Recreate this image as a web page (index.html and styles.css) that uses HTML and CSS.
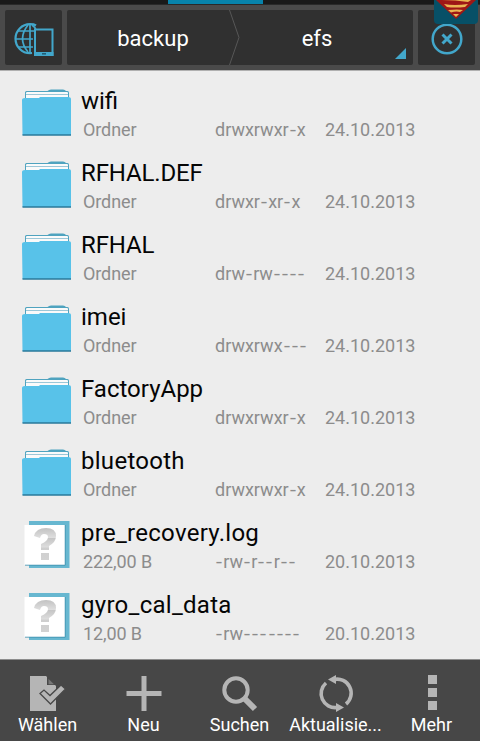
FILE: index.html
```
<!DOCTYPE html>
<html lang="de">
<head>
<meta charset="utf-8">
<title>efs</title>
<link rel="stylesheet" href="styles.css">
</head>
<body>
<svg class="defs" width="0" height="0" aria-hidden="true">
  <symbol id="folder" viewBox="0 0 50 48">
    <path d="M3 10V3.500Q3 2 4.500 2H25.500Q27 .5 29 .5H41Q43 .5 44 2H45.500Q47 2 47 4V10Z" fill="#4fa3bf"/>
    <path d="M4 10V4.200Q4 3 5 3H45Q46 3 46 4V10Z" fill="#fafafa"/>
    <path d="M4 5.500H46" stroke="#9bc7d8"/>
    <path d="M0 11Q0 9 3 9H17L18 8H46Q49 8 49 10V46H.5Z" fill="#58c2e9"/>
    <path d="M.5 46H49" stroke="#28799a" stroke-width="1.300"/>
  </symbol>
  <symbol id="unknown" viewBox="0 0 50 48">
    <path d="M7 0H47.500V47H7Z" fill="#67b7d0"/>
    <path d="M2.500 4H43V44H2.500Z" fill="#fff"/>
    <path d="M3 44.200H43.200V4" fill="none" stroke="#3d91ad" stroke-width=".8"/>
    <path d="M12 15Q14 7 24 7Q34 7 34 15Q34 21 27 25V29H19V23Q26 20 26 16Q26 13 22 13Q19 13 18 17ZM19 32H27V39H19Z" fill="url(#mark)"/>
  </symbol>
  <defs><linearGradient id="mark" x1="0" y1="0" x2="0" y2="1"><stop offset="0" stop-color="#c2c2c2"/><stop offset=".3" stop-color="#dedede"/><stop offset=".32" stop-color="#c5c5c5"/><stop offset=".6" stop-color="#dedede"/><stop offset=".62" stop-color="#cecece"/><stop offset="1" stop-color="#d2d2d2"/></linearGradient></defs>
</svg>
<div class="status"><div class="progress"></div></div>
<header class="top">
  <div class="btn">
    <svg width="40" height="34" viewBox="0 0 40 34" fill="none" stroke="#42a7cb">
      <path d="M22 3.500Q20 2.200 16 2.200A14.500 14.500 0 0 0 16 31.200L18 31" stroke-width="2.200"/>
      <path d="M16 2V31M14 3Q3 17 14 30M18 3Q21 5 22 8M4 9H20M1 17H19M4 25H19" stroke-width="1.700"/>
      <path d="M21 7.500H38.500V33H21Z" stroke-width="2" fill="#303030"/>
      <path d="M20 30H39.500V34H20Z" fill="#42a7cb" stroke="none"/>
      <path d="M28 31.800H32" stroke="#205a72" stroke-width="1.500"/>
    </svg>
  </div>
  <nav class="crumbs">
    <span class="crumb first">backup</span>
    <svg class="sep" width="12" height="55" viewBox="0 0 12 55" fill="none" stroke="#575757"><path d="M1.500 0L11 27.500L1.500 55"/></svg>
    <span class="crumb last">efs</span>
    <span class="corner"></span>
  </nav>
  <div class="btn">
    <svg width="32" height="32" viewBox="0 0 32 32" fill="none" stroke="#42a7cb"><circle cx="16" cy="16" r="14.300" stroke-width="2.500"/><path d="M11.500 11.500L20.500 20.500M20.500 11.500L11.500 20.500" stroke-width="3"/></svg>
  </div>
  <svg class="badge" width="44" height="24" viewBox="0 0 44 24">
    <path d="M0 0H44V20Q44 24 40 24H4Q0 24 0 20Z" fill="#075067"/>
    <path d="M2 0H42L22 19Z" fill="#9e1716"/>
    <path d="M8 0H37L34 2Q22 0 8 0ZM10 4Q20 6 34 4L31 7Q20 8 13 7ZM14 10Q24 9 29 10L26 12Q22 11 17 12.500ZM19 14H25L22 17Z" fill="#eab552"/>
  </svg>
</header>
<main class="list">
  <div class="row"><svg class="ico"><use href="#folder"/></svg><div class="name">wifi</div><div class="meta"><span class="kind">Ordner</span><span class="perm">drwxrwxr<i>-</i>x</span><span class="date">24.10.2013</span></div></div>
  <div class="row"><svg class="ico"><use href="#folder"/></svg><div class="name tight">RFHAL.DEF</div><div class="meta"><span class="kind">Ordner</span><span class="perm">drwxr<i>-</i>xr<i>-</i>x</span><span class="date">24.10.2013</span></div></div>
  <div class="row"><svg class="ico"><use href="#folder"/></svg><div class="name tight">RFHAL</div><div class="meta"><span class="kind">Ordner</span><span class="perm">drw<i>-</i>rw<i>-</i><i>-</i><i>-</i><i>-</i></span><span class="date">24.10.2013</span></div></div>
  <div class="row"><svg class="ico"><use href="#folder"/></svg><div class="name">imei</div><div class="meta"><span class="kind">Ordner</span><span class="perm">drwxrwx<i>-</i><i>-</i><i>-</i></span><span class="date">24.10.2013</span></div></div>
  <div class="row"><svg class="ico"><use href="#folder"/></svg><div class="name">FactoryApp</div><div class="meta"><span class="kind">Ordner</span><span class="perm">drwxrwxr<i>-</i>x</span><span class="date">24.10.2013</span></div></div>
  <div class="row"><svg class="ico"><use href="#folder"/></svg><div class="name wide">bluetooth</div><div class="meta"><span class="kind">Ordner</span><span class="perm">drwxrwxr<i>-</i>x</span><span class="date">24.10.2013</span></div></div>
  <div class="row"><svg class="ico"><use href="#unknown"/></svg><div class="name wide">pre_recovery.log</div><div class="meta"><span class="kind">222,00 B</span><span class="perm"><i>-</i>rw<i>-</i>r<i>-</i><i>-</i>r<i>-</i><i>-</i></span><span class="date">20.10.2013</span></div></div>
  <div class="row"><svg class="ico"><use href="#unknown"/></svg><div class="name wide">gyro_cal_data</div><div class="meta"><span class="kind">12,00 B</span><span class="perm"><i>-</i>rw<i>-</i><i>-</i><i>-</i><i>-</i><i>-</i><i>-</i><i>-</i></span><span class="date">20.10.2013</span></div></div>
</main>
<footer class="bar">
  <div class="tool"><svg width="36" height="36" viewBox="0 0 36 36"><path d="M0 0H16L26 10V35H0Z" fill="#b5b5b5"/><path d="M17 0V9H26Z" fill="#484848"/><path d="M18.500 3V8.300H24Z" fill="#777"/><path d="M10 17.500L14 14L20 19.500L31 9L35.500 13L20.500 28Z" fill="#b5b5b5" stroke="#484848" stroke-width="1.300"/></svg><span>Wählen</span></div>
  <div class="tool"><svg width="36" height="36" viewBox="0 0 36 36"><path d="M18 0V35M.5 17.500H35.500" stroke="#b5b5b5" stroke-width="5"/></svg><span>Neu</span></div>
  <div class="tool"><svg width="36" height="36" viewBox="0 0 36 36" fill="none" stroke="#b5b5b5"><circle cx="14" cy="14" r="11.700" stroke-width="4"/><path d="M22.500 22.500L33 33" stroke-width="6"/></svg><span>Suchen</span></div>
  <div class="tool"><svg width="36" height="36" viewBox="0 0 36 36" fill="none" stroke="#b5b5b5" stroke-width="3.600"><path d="M8 7A14 14 0 0 0 19 31.500M28 28A14 14 0 0 0 16 3.500"/><path d="M10 3.500L18-1V8ZM26 31.500L18 27V36Z" fill="#b5b5b5" stroke="none"/></svg><span>Aktualisie...</span></div>
  <div class="tool"><svg width="36" height="36" viewBox="0 0 36 36"><path d="M14-1H23V8H14ZM14 12H23V21H14ZM14 25H23V34H14Z" fill="#b5b5b5"/></svg><span>Mehr</span></div>
</footer>
</body>
</html>
```
FILE: styles.css
```
* { box-sizing: border-box; }
body {
  margin: 0;
  width: 480px;
  height: 741px;
  overflow: hidden;
  display: flex;
  flex-direction: column;
  background: #ededed;
  font-family: Roboto, sans-serif;
}
svg { overflow: visible; }
.defs { position: absolute; }
.status { height: 5px; flex: none; background: #191919; border-bottom: 1px solid #292929; }
.progress { width: 95px; height: 4px; margin-left: 168px; background: #0783ab; }
.top {
  position: relative;
  flex: none;
  height: 66px;
  padding: 5px 5px 5px;
  display: flex;
  gap: 5px;
  background: #4a4a4a;
  border-bottom: 1px solid #b0b0b0;
}
.btn {
  width: 57px;
  padding-top: 2px;
  border-radius: 2px;
  background: #303030;
  display: flex;
  align-items: center;
  justify-content: center;
}
.crumbs {
  position: relative;
  flex: 1;
  display: flex;
  align-items: center;
  border-radius: 2px;
  background: #303030;
  color: #fff;
  font-size: 22px;
}
.crumb { text-align: center; padding-top: 2px; }
.first { width: 161px; padding-left: 11px; }
.last { width: 155px; padding-right: 1px; }
.corner {
  position: absolute;
  right: 7px;
  bottom: 6px;
  border-left: 11px solid transparent;
  border-bottom: 11px solid #42a7cb;
}
.badge { position: absolute; left: 434px; top: -5px; }
.list { flex: none; height: 588px; padding: 6px 0 0 22px; }
.row {
  height: 72px;
  display: grid;
  grid-template-columns: 59px 1fr;
  grid-template-rows: 42px 30px;
}
.ico { grid-row: 1 / 3; width: 50px; height: 48px; margin-top: 12px; }
.name { color: #050505; font-size: 24px; line-height: 28px; padding-top: 10px; white-space: nowrap; }
.tight { letter-spacing: -.15px; }
.wide { letter-spacing: .28px; }
.meta { display: flex; color: #8c8c8c; font-size: 18px; line-height: 22px; white-space: nowrap; }
.kind { width: 134px; padding-left: 2px; letter-spacing: -.1px; }
.perm { width: 110px; }
.perm i {
  font-style: normal;
  display: inline-block;
  width: 8.200px;
  text-align: center;
  transform: scaleX(1.2);
}
.bar {
  flex: 1;
  display: flex;
  background: #474747;
  border-top: 1px solid #8d8d8d;
  padding: 16px 0 0;
}
.tool {
  width: 96px;
  margin-left: -.5px;
  margin-right: .5px;
  display: flex;
  flex-direction: column;
  align-items: center;
  color: #fff;
  font-size: 18px;
  line-height: 22px;
  gap: 2px;
}
```
